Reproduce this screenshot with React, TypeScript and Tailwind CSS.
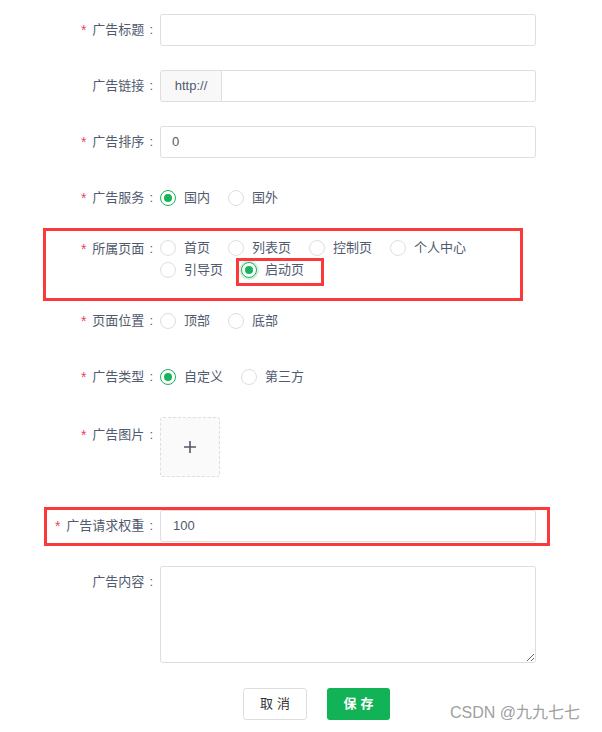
import React from "react";

const FONT = { fontFamily: '"Liberation Sans", "Noto Sans CJK SC", sans-serif' };

function Label({ text, required = true }: { text: string; required?: boolean }) {
  return (
    <div className="w-[160px] shrink-0 flex justify-end pr-[7px] h-[32px] items-center text-[13px] text-[#515a6e]">
      {required && <span className="text-[#ee3f5e] mr-[6px] text-[14px]">*</span>}
      <span>{text}</span>
      <span className="ml-[5px]">:</span>
    </div>
  );
}

function Radio({ label, checked = false, focus = false }: { label: string; checked?: boolean; focus?: boolean }) {
  return (
    <div className="flex items-center mr-[18px] h-[22px]">
      <span
        className={`w-[16px] h-[16px] rounded-full border flex items-center justify-center bg-white ${
          checked ? "border-[#19b35b]" : "border-[#dcdee2]"
        } ${focus ? "shadow-[0_0_0_2px_rgba(25,179,91,0.18)]" : ""}`}
      >
        {checked && <span className="w-[8px] h-[8px] rounded-full bg-[#19b35b]" />}
      </span>
      <span className="ml-[8px] text-[13px] text-[#515a6e]">{label}</span>
    </div>
  );
}

export default function App() {
  return (
    <div className="relative w-[602px] h-[732px] bg-white overflow-hidden" style={FONT}>
      <div className="pt-[14px] flex flex-col">
        {/* 广告标题 */}
        <div className="flex mb-[24px]">
          <Label text="广告标题" />
          <div className="w-[376px] h-[32px] border border-[#dcdee2] rounded-[3px]" />
        </div>
        {/* 广告链接 */}
        <div className="flex mb-[24px]">
          <Label text="广告链接" required={false} />
          <div className="w-[376px] h-[32px] flex">
            <div className="w-[62px] h-full border border-[#dcdee2] bg-[#f8f8f9] rounded-l-[3px] flex items-center justify-center text-[13px] text-[#515a6e]">
              http://
            </div>
            <div className="flex-1 h-full border border-l-0 border-[#dcdee2] rounded-r-[3px]" />
          </div>
        </div>
        {/* 广告排序 */}
        <div className="flex mb-[24px]">
          <Label text="广告排序" />
          <div className="w-[376px] h-[32px] border border-[#dcdee2] rounded-[3px] flex items-center pl-[11px] text-[13px] text-[#515a6e]">
            0
          </div>
        </div>
        {/* 广告服务 */}
        <div className="flex mb-[24px]">
          <Label text="广告服务" />
          <div className="flex items-center h-[32px]">
            <Radio label="国内" checked />
            <Radio label="国外" />
          </div>
        </div>
        {/* 所属页面 */}
        <div className="flex mb-[24px] -mt-[1px]">
          <div className="-mt-[4px]">
            <Label text="所属页面" />
          </div>
          <div className="w-[376px] flex flex-wrap">
            <Radio label="首页" />
            <Radio label="列表页" />
            <Radio label="控制页" />
            <Radio label="个人中心" />
            <Radio label="引导页" />
            <Radio label="启动页" checked focus />
          </div>
        </div>
        {/* 页面位置 */}
        <div className="flex mb-[24px]">
          <Label text="页面位置" />
          <div className="flex items-center h-[32px]">
            <Radio label="顶部" />
            <Radio label="底部" />
          </div>
        </div>
        {/* 广告类型 */}
        <div className="flex mb-[24px]">
          <Label text="广告类型" />
          <div className="flex items-center h-[32px]">
            <Radio label="自定义" checked />
            <Radio label="第三方" />
          </div>
        </div>
        {/* 广告图片 */}
        <div className="flex mb-[33px]">
          <div className="mt-[2px]">
            <Label text="广告图片" />
          </div>
          <div className="w-[60px] h-[60px] border border-dashed border-[#dcdee2] bg-[#fafafa] rounded-[3px] flex items-center justify-center">
            <svg width="14" height="14" viewBox="0 0 14 14">
              <path d="M7 1v12M1 7h12" stroke="#515a6e" strokeWidth="1.6" />
            </svg>
          </div>
        </div>
        {/* 广告请求权重 */}
        <div className="flex mb-[24px]">
          <Label text="广告请求权重" />
          <div className="w-[376px] h-[32px] border border-[#dcdee2] rounded-[3px] flex items-center pl-[12px] text-[13px] text-[#515a6e]">
            100
          </div>
        </div>
        {/* 广告内容 */}
        <div className="flex mb-[25px]">
          <Label text="广告内容" required={false} />
          <textarea className="w-[376px] h-[97px] border border-[#dcdee2] rounded-[3px] outline-none" />
        </div>
        {/* buttons */}
        <div className="flex pl-[243px] gap-[20px]">
          <button className="w-[64px] h-[32px] border border-[#dcdee2] rounded-[3px] bg-white text-[13px] text-[#333] tracking-[4px] pl-[4px]">
            取消
          </button>
          <button className="w-[63px] h-[32px] rounded-[3px] bg-[#12b356] text-[13px] font-bold text-white tracking-[4px] pl-[4px]">
            保存
          </button>
        </div>
      </div>

      {/* annotation boxes */}
      <div className="absolute left-[43px] top-[228px] w-[480px] h-[73px] border-[3px] border-[#fa3a3a]" />
      <div className="absolute left-[236px] top-[258px] w-[88px] h-[28px] border-[3px] border-[#fa3a3a]" />
      <div className="absolute left-[44px] top-[507px] w-[506px] h-[39px] border-[3px] border-[#fa3a3a]" />

      {/* watermark */}
      <div className="absolute left-[450px] top-[703px] text-[16px] leading-[20px] text-[#a0a0a0]">CSDN @九九七七</div>
    </div>
  );
}
